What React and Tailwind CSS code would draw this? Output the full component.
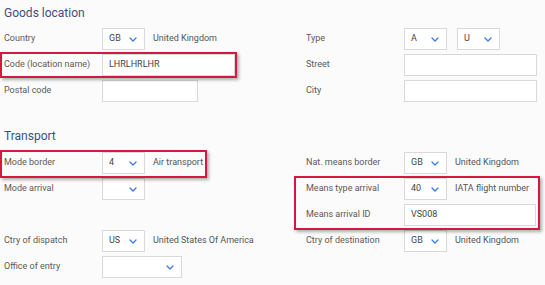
import React from 'react';

const font = { fontFamily: 'Roboto, "Liberation Sans", sans-serif' };

function Chevron() {
  return (
    <svg width="8" height="5" viewBox="0 0 8 5" className="shrink-0">
      <path d="M1 1l3 3 3-3" fill="none" stroke="#3a7bdc" strokeWidth="1.3" strokeLinecap="round" strokeLinejoin="round" />
    </svg>
  );
}

function Select({ value, wide }) {
  return (
    <div className={`h-[22px] ${wide ? 'w-[80px]' : 'w-[43px]'} flex items-center justify-between pl-[6px] pr-[7px] bg-white border border-[#d9d9d9] text-[9px] text-[#444]`}>
      <span>{value}</span>
      <Chevron />
    </div>
  );
}

function Input({ value, w }) {
  return (
    <div className={`h-[22px] ${w} flex items-center px-[6px] bg-white border border-[#d9d9d9] text-[9px] text-[#444]`}>
      {value}
    </div>
  );
}

function Row({ label, gap = 'gap-[8px]', children }) {
  return (
    <div className="h-[22px] flex items-center">
      <div className="w-[98px] shrink-0 text-[9px] text-[#5a5a5a]">{label}</div>
      <div className={`flex items-center ${gap}`}>{children}</div>
    </div>
  );
}

function Suffix({ children }) {
  return <span className="text-[9px] text-[#555] whitespace-nowrap">{children}</span>;
}

// red annotation frame drawn over a row
function Mark({ className }) {
  return (
    <span className={`absolute pointer-events-none border-2 border-[#d6183f] shadow-[2px_2px_3px_rgba(0,0,0,0.3)] ${className}`} />
  );
}

export default function App() {
  return (
    <div className="w-[545px] h-[285px] overflow-hidden bg-[#fbfbfb] pl-[4px]" style={font}>
      {/* Goods location */}
      <h2 className="pt-[5px] h-[28px] text-[12px] leading-[16px] text-[#3f4f80]">Goods location</h2>
      <div className="grid grid-cols-[302px_1fr] gap-y-[4px]">
        <Row label="Country">
          <Select value="GB" />
          <Suffix>United Kingdom</Suffix>
        </Row>
        <Row label="Type" gap="gap-[10px]">
          <Select value="A" />
          <Select value="U" />
        </Row>

        <div className="relative">
          <Mark className="-left-[4px] -top-[2px] -bottom-[2px] w-[237px]" />
          <Row label="Code (location name)">
            <Input value="LHRLHRLHR" w="w-[133px]" />
          </Row>
        </div>
        <Row label="Street">
          <Input w="w-[133px]" />
        </Row>

        <Row label="Postal code">
          <Input w="w-[96px]" />
        </Row>
        <Row label="City">
          <Input w="w-[133px]" />
        </Row>
      </div>

      {/* Transport */}
      <h2 className="mt-[26px] h-[24px] text-[12px] leading-[16px] text-[#3f4f80]">Transport</h2>
      <div className="grid grid-cols-[302px_1fr] gap-y-[4px]">
        <div className="relative">
          <Mark className="-left-[4px] -top-[2px] -bottom-[4px] w-[207px]" />
          <Row label="Mode border">
            <Select value="4" />
            <Suffix>Air transport</Suffix>
          </Row>
        </div>
        <Row label="Nat. means border">
          <Select value="GB" />
          <Suffix>United Kingdom</Suffix>
        </Row>

        <Row label="Mode arrival">
          <Select value="" />
        </Row>
        <div className="relative row-span-2 flex flex-col gap-[4px]">
          <Mark className="-left-[12px] -top-[2px] -bottom-[4px] w-[246px]" />
          <Row label="Means type arrival">
            <Select value="40" />
            <Suffix>IATA flight number</Suffix>
          </Row>
          <Row label="Means arrival ID">
            <Input value="VS008" w="w-[132px]" />
          </Row>
        </div>

        <div className="h-[22px]" />

        <Row label="Ctry of dispatch">
          <Select value="US" />
          <Suffix>United States Of America</Suffix>
        </Row>
        <Row label="Ctry of destination">
          <Select value="GB" />
          <Suffix>United Kingdom</Suffix>
        </Row>

        <Row label="Office of entry">
          <Select value="" wide />
        </Row>
        <div />
      </div>
    </div>
  );
}
